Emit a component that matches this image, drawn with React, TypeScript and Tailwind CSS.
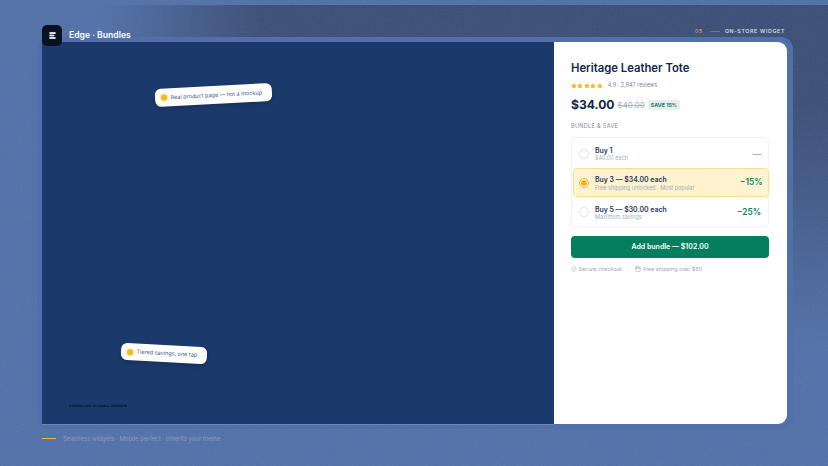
import { Calendar, ShieldCheck, Star } from 'lucide-react'

const FONT = 'font-["Inter","Liberation_Sans",sans-serif]'

function Sticker({ text, className }: { text: string; className: string }) {
  return (
    <div
      className={`absolute flex items-center gap-[3.5px] rounded-[6px] bg-white pl-[6px] text-[5.5px] whitespace-nowrap text-[#46587a] shadow-[0_2px_4px_rgba(8,20,50,0.3)] ${className}`}
    >
      <span className="h-[6px] w-[6px] flex-shrink-0 rounded-full bg-[#f9b81c] shadow-[0_0_0_1.5px_#fdeebc]" />
      {text}
    </div>
  )
}

function Radio({ on }: { on?: boolean }) {
  if (on) {
    return (
      <span className="flex h-[10px] w-[10px] flex-shrink-0 items-center justify-center rounded-full border border-[#f2b01e] bg-white">
        <span className="h-[6px] w-[6px] rounded-full bg-[#f2b01e]" />
      </span>
    )
  }
  return <span className="h-[10px] w-[10px] flex-shrink-0 rounded-full border border-[#dde3e8] bg-white" />
}

function Tier({
  title,
  sub,
  off,
  className,
  on,
  nudge,
}: {
  title: string
  sub: string
  off: string
  className: string
  on?: boolean
  nudge?: boolean
}) {
  return (
    <div className={`relative flex items-center overflow-hidden ${className}`}>
      {on && (
        <>
          <div className="absolute inset-y-0 left-0 w-[26px] bg-[radial-gradient(circle,#ffffff_0.6px,transparent_0.7px)] bg-[length:2.5px_2.5px] [mask-image:linear-gradient(90deg,black,transparent)]" />
          <div className="absolute inset-y-0 right-0 w-[70px] bg-[radial-gradient(circle,#ffffff_0.6px,transparent_0.7px)] bg-[length:2.5px_2.5px] [mask-image:linear-gradient(270deg,black,transparent)]" />
        </>
      )}
      <div className="relative flex w-full items-center">
        <Radio on={on} />
        <div className={nudge ? 'ml-[6px] flex-1 pt-[2px]' : 'ml-[6px] flex-1'}>
          <div className="text-[6.9px] leading-[9px] font-semibold text-[#1e3560]">{title}</div>
          <div className="mt-[0.5px] text-[5.5px] leading-[7px] text-[#a3aebc]">{sub}</div>
        </div>
        <div
          className={
            off === '—' ? 'text-[8.3px] font-semibold text-[#a3aebc]' : 'text-[8.3px] font-semibold text-[#0f7f62]'
          }
        >
          {off}
        </div>
      </div>
    </div>
  )
}

export default function App() {
  return (
    <div className={`relative h-[466px] w-[828px] overflow-hidden bg-[#5170a9] ${FONT}`}>
      {/* dark wash top right */}
      <div className="absolute inset-x-0 top-[5px] bottom-0 bg-[#3a4d75] [mask-composite:intersect] [mask-image:linear-gradient(90deg,transparent_100px,black_260px),linear-gradient(180deg,black_100px,transparent_340px)]" />
      <svg className="pointer-events-none absolute inset-0 h-full w-full opacity-[0.1]">
        <filter id="grain">
          <feTurbulence type="fractalNoise" baseFrequency="1.1" numOctaves="2" />
          <feColorMatrix type="saturate" values="0" />
        </filter>
        <rect width="100%" height="100%" filter="url(#grain)" />
      </svg>

      <div className="relative pt-[25px]">
        <header className="relative z-10 flex h-[20px] items-center pr-[43px] pl-[42px]">
          <div className="flex h-[21px] w-[20px] items-center justify-center rounded-[5px] bg-[#0a1122]">
            <svg width="7" height="7" viewBox="0 0 7 7" fill="#ffffff">
              <rect x="0.4" y="0.2" width="6.2" height="1.7" />
              <rect x="0.4" y="2.7" width="5" height="1.6" />
              <rect x="0.4" y="5.1" width="6.2" height="1.7" />
            </svg>
          </div>
          <div className="mt-[1px] ml-[7px] text-[8.6px] font-semibold text-white">Edge · Bundles</div>
          <div className="mb-[7px] ml-auto flex items-center text-[5.3px] tracking-[0.12em]">
            <span className="text-[#d9b45e]">05</span>
            <span className="mr-[5px] ml-[7px] h-px w-[10px] bg-white/20" />
            <span className="font-medium text-[#dde3ee]">ON-STORE WIDGET</span>
          </div>
        </header>

        <div className="relative -mt-[8px] ml-[37px] w-[756px] rounded-[12px] bg-[#5170a9] py-[5px] pr-[6px] pl-[5px]">
          <div className="flex h-[382px]">
            <div className="relative w-[512px] bg-[#1b3a6b] shadow-[0_1px_0_rgba(255,255,255,0.15)]">
              <Sticker
                text="Real product page — not a mockup"
                className="top-[44px] left-[113px] h-[18px] w-[117px] -rotate-3"
              />
              <Sticker text="Tiered savings, one tap" className="top-[303px] left-[79px] h-[17px] w-[86px] rotate-3" />
              <div className="absolute top-[360px] left-[27px] text-[4.5px] leading-[7px] whitespace-nowrap text-black [clip-path:inset(38%_0_30%_0)]">
                Interactive product preview
              </div>
            </div>

            <div className="flex-1 rounded-r-[9px] bg-white pt-[19px] pr-[18px] pl-[17px]">
              <h1 className="text-[11.3px] leading-[15px] font-semibold text-[#12264d]">Heritage Leather Tote</h1>
              <div className="mt-[5px] flex h-[9px] items-center">
                <div className="flex gap-[0.7px]">
                  {[0, 1, 2, 3, 4].map((i) => (
                    <Star key={i} className="h-[5.8px] w-[5.8px] fill-[#f9b81c] text-[#f9b81c]" />
                  ))}
                </div>
                <span className="ml-[5px] text-[5.5px] text-[#7b889d]">4.9 · 2,847 reviews</span>
              </div>
              <div className="mt-[5px] flex h-[20px] items-center">
                <span className="text-[12.1px] font-bold text-[#12264d]">$34.00</span>
                <span className="ml-[3px] text-[8px] text-[#a9b2c0] line-through">$40.00</span>
                <span className="ml-[3px] rounded-[2px] bg-[#e8eeee] px-[3px] py-[1px] text-[5.3px] leading-[8px] font-bold text-[#0f7f62]">
                  SAVE 15%
                </span>
              </div>
              <div className="mt-[7px] text-[5.5px] leading-[8px] tracking-[0.06em] text-[#7d8ba3]">BUNDLE &amp; SAVE</div>

              <div className="mt-[7px] rounded-[6px] border border-[#f1f3f5] pt-[2px]">
                <Tier title="Buy 1" sub="$40.00 each" off="—" className="h-[28px] px-[7px]" />
                <Tier
                  on
                  nudge
                  title="Buy 3 — $34.00 each"
                  sub="Free shipping unlocked · Most popular"
                  off="−15%"
                  className="-mr-[0.5px] ml-[1px] h-[29px] rounded-[4px] border border-[#fbdc8a] bg-[#fff3cf] pr-[5px] pl-[5px]"
                />
                <Tier nudge title="Buy 5 — $30.00 each" sub="Maximum savings" off="−25%" className="h-[30px] px-[7px]" />
              </div>

              <button className="mt-[8px] h-[22px] w-full rounded-[4px] bg-[#047f5e] text-[7px] font-semibold text-white">
                Add bundle — $102.00
              </button>

              <div className="mt-[7px] flex items-center text-[5.4px] text-[#9aa6b6]">
                <ShieldCheck className="h-[6px] w-[6px]" />
                <span className="ml-[1.5px]">Secure checkout</span>
                <span className="mx-[6px]">·</span>
                <Calendar className="h-[6px] w-[6px]" />
                <span className="ml-[2px]">Free shipping over $50</span>
              </div>
            </div>
          </div>
        </div>

        <footer className="mt-[3px] flex h-[12px] items-center pl-[42px] text-[6px] text-[#8d9ab8]">
          <span className="h-px w-[14px] bg-[#f0b33a]" />
          <span className="ml-[7px]">Seamless widgets · Mobile perfect · Inherits your theme</span>
        </footer>
      </div>
    </div>
  )
}
